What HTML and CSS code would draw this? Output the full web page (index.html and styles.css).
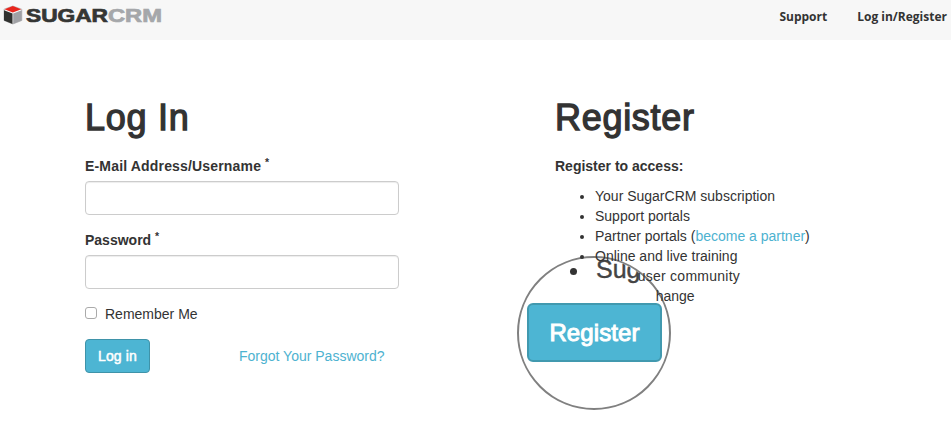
FILE: index.html
```html
<!DOCTYPE html>
<html lang="en">
<head>
<meta charset="utf-8">
<title>SugarCRM</title>
<link rel="stylesheet" href="styles.css">
</head>
<body>
<header class="topbar">
  <svg class="logo" width="166" height="30" viewBox="0 0 166 30" role="img" aria-label="SugarCRM">
    <path fill="#f7f7f7" stroke="#8e8f91" stroke-width=".5" d="M4 9.200 12.800 6l9 3.200v11.300L12.800 24 4 20.500z"/>
    <path fill="#e8251c" d="M4.500 9.200 12.800 6l8.500 3.200-8.500 3.300z"/>
    <path fill="#30312f" d="M4 10.200v10.300l8.500 3.500V13.400z"/>
    <path fill="#a0a1a5" d="M13.200 13.400 21.800 10.200v10.300L13.200 24z"/>
    <text class="word word-dark" x="26" y="22" textLength="82" lengthAdjust="spacingAndGlyphs">SUGAR</text>
    <text class="word word-light" x="108" y="22" textLength="54" lengthAdjust="spacingAndGlyphs">CRM</text>
  </svg>
  <nav class="links"><a>Support</a><a>Log in/Register</a></nav>
</header>
<main class="columns">
  <form class="login">
    <h1 class="title-login">Log In</h1>
    <label class="label" for="user"><span class="user-text">E-Mail Address/Username</span> <sup>*</sup></label>
    <input class="field" id="user" type="text">
    <label class="label" for="pass"><span>Password</span> <sup>*</sup></label>
    <input class="field" id="pass" type="password">
    <label class="remember"><input class="check" type="checkbox"><span>Remember Me</span></label>
    <div class="actions"><button class="button" type="button">Log in</button><a class="link">Forgot Your Password?</a></div>
  </form>
  <section class="register">
    <h1 class="title-register">Register</h1>
    <p class="label">Register to access:</p>
    <ul class="list">
      <li>Your SugarCRM subscription</li>
      <li>Support portals</li>
      <li>Partner portals (<a class="link">become a partner</a>)</li>
      <li class="over-lens">Online and live training</li>
      <li class="community">Sugar <span class="over-lens">user community</span></li>
      <li>SugarExc<span class="over-lens">hange</span></li>
    </ul>
    <div class="lens">
      <span class="lens-dot"></span>
      <span class="lens-text">Sug</span>
      <button class="lens-button" type="button">Register</button>
    </div>
  </section>
</main>
</body>
</html>
```
FILE: styles.css
```css
* { box-sizing: border-box; }
body {
  margin: 0;
  height: 445px;
  overflow: hidden;
  background: #fff;
  color: #333;
  font: 14px/20px "Liberation Sans", Arial, sans-serif;
}
.topbar {
  display: flex;
  justify-content: space-between;
  height: 40px;
  background: #f7f7f7;
}
.word { font-size: 18px; font-weight: 700; }
.word-dark { fill: #353634; stroke: #353634; stroke-width: .7px; }
.word-light { fill: #a5a7aa; stroke: #a5a7aa; stroke-width: .7px; }
.links {
  display: flex;
  gap: 30px;
  padding: 7px 4px 0 0;
  font: 700 12px/20px "Open Sans", sans-serif;
}
.columns {
  display: grid;
  grid-template-columns: 470px 1fr;
  padding: 58px 0 0 85px;
}
h1 {
  margin: 0 0 18px;
  font-size: 36px;
  line-height: 40px;
  font-weight: 400;
  -webkit-text-stroke: 1.3px #333;
}
.title-login { letter-spacing: .75px; }
.title-register { letter-spacing: .7px; }
.user-text { letter-spacing: .17px; }
.label {
  display: block;
  margin: 0 0 5px;
  font-weight: 700;
}
.label sup {
  position: relative;
  top: -.5em;
  font-size: 10.5px;
  line-height: 0;
  vertical-align: baseline;
}
.field {
  display: block;
  width: 314px;
  height: 34px;
  margin: 0 0 15px;
  border: 1px solid #ccc;
  border-radius: 4px;
  box-shadow: inset 0 1px 1px rgba(0,0,0,.075);
}
.remember { display: flex; gap: 8px; }
.check {
  appearance: none;
  width: 12px;
  height: 12px;
  margin: 3px 0 0;
  border: 1px solid #aaa;
  border-radius: 3px;
  background: #fff;
}
.actions {
  display: flex;
  align-items: center;
  gap: 89px;
  margin-top: 15px;
}
.button {
  width: 65px;
  height: 34px;
  padding: 0;
  border: 1px solid #3f93a9;
  border-radius: 4px;
  background: #4db5d3;
  color: #fff;
  font: 400 14px/20px "Liberation Sans", Arial, sans-serif;
  letter-spacing: .15px;
  -webkit-text-stroke: .5px #fff;
}
.link { color: #4db2d0; }
.register { position: relative; }
.list { margin: 10px 0 0; padding-left: 40px; }
.over-lens { position: relative; z-index: 1; }
.community { letter-spacing: .25px; }
.lens {
  position: absolute;
  left: -38.5px;
  top: 158px;
  width: 154px;
  height: 154px;
  border: 2px solid #808080;
  border-radius: 50%;
  background: #fff;
  overflow: hidden;
}
.lens-dot {
  position: absolute;
  left: 51.5px;
  top: 10px;
  width: 7px;
  height: 7px;
  border-radius: 50%;
  background: #333;
}
.lens-text {
  position: absolute;
  left: 77.5px;
  top: -1px;
  color: #444;
  font-size: 25px;
  line-height: 24px;
  -webkit-text-stroke: .4px #444;
}
.lens-button {
  position: absolute;
  left: 8.5px;
  top: 45px;
  width: 135px;
  height: 59px;
  border: 2px solid #4199af;
  border-radius: 6px;
  background: #4db5d3;
  color: #fff;
  font: 400 24px/30px "Liberation Sans", Arial, sans-serif;
  letter-spacing: .1px;
  -webkit-text-stroke: 1px #fff;
}
```
